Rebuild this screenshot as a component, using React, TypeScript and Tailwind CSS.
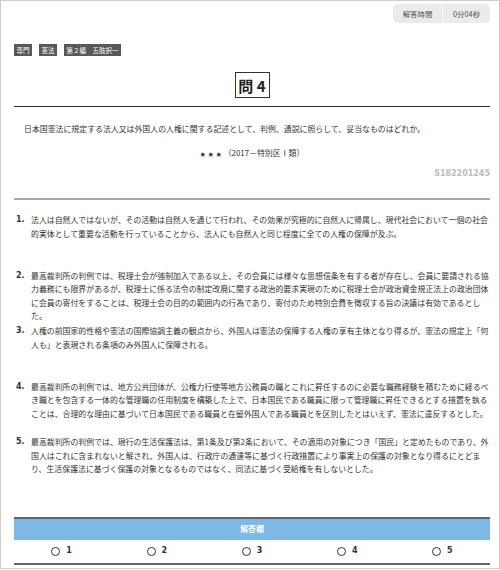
const tags = ["専門", "憲法", "第２編　五肢択一"];

const options = [
  "法人は自然人ではないが、その活動は自然人を通じて行われ、その効果が究極的に自然人に帰属し、現代社会において一個の社会的実体として重要な活動を行っていることから、法人にも自然人と同じ程度に全ての人権の保障が及ぶ。",
  "最高裁判所の判例では、税理士会が強制加入である以上、その会員には様々な思想信条を有する者が存在し、会員に要請される協力義務にも限界があるが、税理士に係る法令の制定改廃に関する政治的要求実現のために税理士会が政治資金規正法上の政治団体に会員の寄付をすることは、税理士会の目的の範囲内の行為であり、寄付のため特別会費を徴収する旨の決議は有効であるとした。",
  "人権の前国家的性格や憲法の国際協調主義の観点から、外国人は憲法の保障する人権の享有主体となり得るが、憲法の規定上「何人も」と表現される条項のみ外国人に保障される。",
  "最高裁判所の判例では、地方公共団体が、公権力行使等地方公務員の職とこれに昇任するのに必要な職務経験を積むために経るべき職とを包含する一体的な管理職の任用制度を構築した上で、日本国民である職員に限って管理職に昇任できるとする措置を執ることは、合理的な理由に基づいて日本国民である職員と在留外国人である職員とを区別したとはいえず、憲法に違反するとした。",
  "最高裁判所の判例では、現行の生活保護法は、第1条及び第2条において、その適用の対象につき「国民」と定めたものであり、外国人はこれに含まれないと解され、外国人は、行政庁の通達等に基づく行政措置により事実上の保護の対象となり得るにとどまり、生活保護法に基づく保護の対象となるものではなく、同法に基づく受給権を有しないとした。",
];

export default function App() {
  return (
    <div
      lang="ja"
      className="flex h-[569px] w-[500px] flex-col border border-[#cdcdcd] bg-white pl-[13px] pr-[9px] font-['Noto_Sans_CJK_JP',sans-serif] text-[#333]"
    >
      {/* timer */}
      <div className="flex justify-end pt-[3px]">
        <div className="flex h-[19px] overflow-hidden rounded-[5px] bg-[#ebebeb] text-[7.4px] text-[#555]">
          <div className="flex w-[49px] items-center justify-center">解答時間</div>
          <div className="w-px bg-[#f7f7f7]" />
          <div className="flex w-[47px] items-center justify-center">0分04秒</div>
        </div>
      </div>

      {/* tags */}
      <div className="mt-[21px] flex gap-[7px]">
        {tags.map((t) => (
          <span
            key={t}
            className="flex h-[12px] items-center bg-[#585858] px-[2.5px] text-[6.5px] leading-none text-white"
          >
            {t}
          </span>
        ))}
      </div>

      {/* title */}
      <div className="mt-[16px] flex h-[26px] w-[35px] items-center justify-center self-center border border-[#333] text-[15px] font-bold leading-none text-[#222]">
        問 4
      </div>
      <div className="mt-[8px] h-px bg-[#333]" />

      <p className="mt-[15px] pl-[10px] text-[7.9px] leading-[13px]">
        日本国憲法に規定する法人又は外国人の人権に関する記述として、判例、通説に照らして、妥当なものはどれか。
      </p>
      <p className="mt-[10.5px] text-center text-[7.9px] leading-[13px]">
        <span className="text-[6px] tracking-[2px]">★★★</span>（2017－特別区Ⅰ類）
      </p>
      <p className="mt-[7.5px] text-right font-['DejaVu_Sans',sans-serif] text-[8px] font-bold leading-[13px] text-[#bdbdbd]">
        S182201245
      </p>
      <div className="mt-[17.5px] h-[2px] bg-[#a8a8a8]" />

      {/* choices */}
      <ol className="mt-[13.5px]">
        {options.map((o, i) => (
          <li key={i} className="flex min-h-[55.5px] items-start">
            <span className="w-[17px] shrink-0 pl-[2px] font-['DejaVu_Sans',sans-serif] text-[8px] font-bold leading-[13.5px]">
              {i + 1}.
            </span>
            <span className="flex-1 text-[7.9px] leading-[13.5px]">{o}</span>
          </li>
        ))}
      </ol>

      {/* answer sheet */}
      <div className="mt-[26px] flex h-[23px] items-center justify-center border-t-2 border-[#666] bg-[#7db8e6] text-[7.9px] font-bold text-white">
        解答欄
      </div>
      <div className="grid h-[25px] grid-cols-5 border-b-2 border-[#666]">
        {[1, 2, 3, 4, 5].map((n) => (
          <label key={n} className="flex items-center justify-center gap-[6px]">
            <span className="h-[9px] w-[9px] rounded-full border-[1.5px] border-[#333] bg-white" />
            <span className="font-['DejaVu_Sans',sans-serif] text-[8px] font-bold text-[#333]">{n}</span>
          </label>
        ))}
      </div>
    </div>
  );
}
